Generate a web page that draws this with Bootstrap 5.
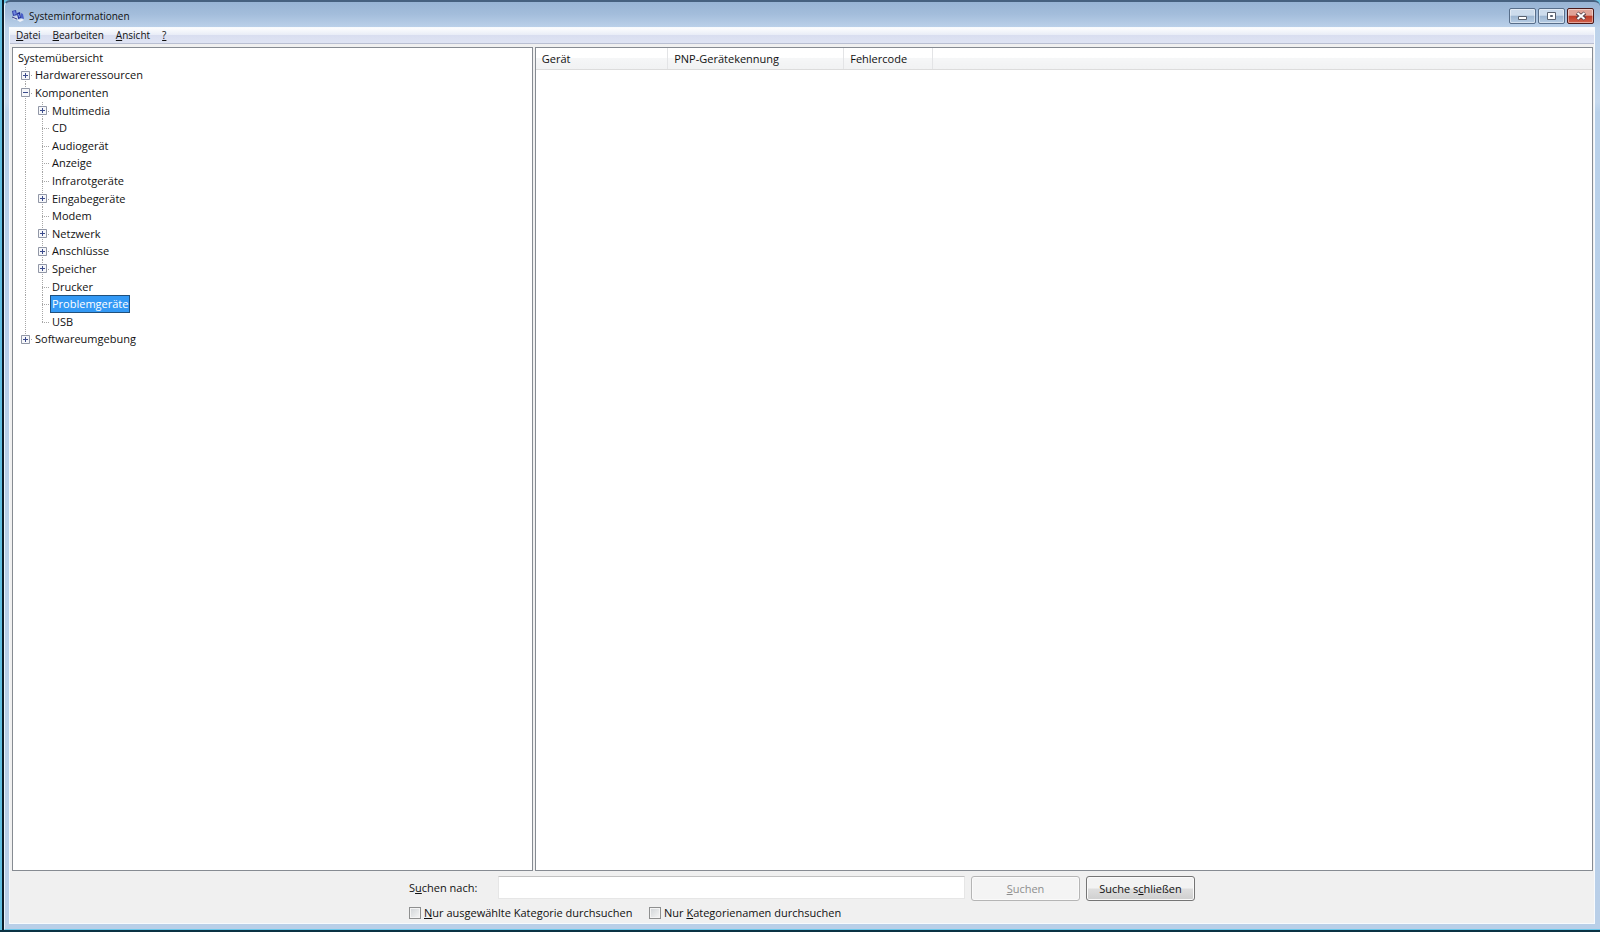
<!DOCTYPE html>
<html lang="de">
<head>
<meta charset="utf-8">
<meta name="viewport" content="width=device-width, initial-scale=1">
<title>Systeminformationen</title>
<link href="https://cdn.jsdelivr.net/npm/bootstrap@5.3.0/dist/css/bootstrap.min.css" rel="stylesheet">
<style>
body { font-family: "Open Sans", "Noto Sans", sans-serif; font-size: 11px; line-height: 16px; color: #111; background: linear-gradient(90deg, #62bfe0 0 2px, #0b1c28 2px 4px, #6cc4e4 4px); border-bottom: 2px solid #0a3344; }
a { color: inherit; text-decoration: none; }
.win { margin-left: 4px; border-top: 2px solid #46617f; border-left: 1px solid #e8f4fc; border-bottom: 1px solid #6cc7ea; border-radius: 6px 6px 0 0; padding: 0 5px 5px 4px; background: linear-gradient(#98b4d4 0, #a3bddb 12px, #bcd2ea 26px, #c6d9ee 100px, #b9d1ea 110px, #b9cfe8 100%); }
.title-bar { height: 25px; padding: 2px 1px 0 3px; gap: 5px; font-size: 10px; }
.caption-btn { width: 27px; height: 16px; border: 1px solid #586e8a; border-radius: 2px; background: linear-gradient(#cddcec 0 45%, #9db6d1 50%, #b7cde4); box-shadow: inset 0 0 0 1px #ffffff70; }
.caption-close { border-color: #4b1a1a; background: linear-gradient(#e0a397 0 45%, #bf3b27 50%, #d2624d); }
.client { background: #f0f0f0; border: 1px solid #f7fafd; }
.menu-bar { height: 16px; padding-left: 6px; gap: 12px; background: linear-gradient(#fcfdfe, #e9edf7 45%, #d9def0 50%, #dfe4f4); border-bottom: 1px solid #b9bfd2; font-size: 10px; line-height: 14px; }
.panes { gap: 2px; padding: 3px 1px 0 2px; }
.pane { background: #fff; border: 1px solid #868b92; }
.tree-pane { flex: 0 0 calc(33% - 1px); }
.tree { height: 299px; margin-top: 1px; padding-left: 4px; }
.tree li { flex: 1 1 0; }
.tree a { padding: 0 1px; white-space: nowrap; }
.tree a.selected { color: #fff; background: #3399f5; outline: 1px solid #20507c; }
.node { position: relative; width: 16px; margin-right: 1px; align-self: stretch; }
.node.line { background: linear-gradient(#0000, #0000), repeating-linear-gradient(#a6a6a6 0 1px, #fff 1px 2px) 8px 0 / 1px 100% no-repeat; }
.node.line.last { background-size: auto, 1px 50%; }
.node.stub::after { content: ""; position: absolute; left: 8px; right: 1px; top: 50%; border-top: 1px dotted #a6a6a6; }
.expander { position: relative; z-index: 1; width: 9px; height: 9px; margin-left: 4px; }
.grid-head th { height: 21px; padding: 2px 6px 0; font-weight: 400; border-right: 1px solid #e3e4e6; border-bottom: 1px solid #dcdcdc; background: linear-gradient(#fff 0 45%, #f5f6f7 50%, #f1f2f3); }
.grid-head th:last-child { border-right: 0; }
.search { width: 786px; max-width: 100%; padding: 5px 0 2px; }
.search-label { width: 89px; }
.search-box { height: 23px; border: 1px solid #e6e6e6; border-top-color: #c2c2c2; background: #fff; margin-right: 6px; }
.push { width: 109px; height: 25px; border: 1px solid #757575; border-radius: 3px; color: #111; background: linear-gradient(#f3f3f3 0 48%, #dedede 52%, #cfcfcf); box-shadow: inset 0 0 0 1px #fafafa; }
.push:disabled { color: #8e8e8e; border-color: #b5b5b5; background: #f4f4f4; }
.tick { appearance: none; width: 12px; height: 12px; margin-right: 3px; border: 1px solid #8e8f8f; background: linear-gradient(135deg, #cfd3d6, #f6f6f6); box-shadow: inset 0 0 0 1px #f4f4f4; }
.scope { width: 240px; white-space: nowrap; }
</style>
</head>
<body class="min-vh-100 d-flex flex-column">
<svg class="d-none">
  <symbol id="plus" viewBox="0 0 9 9"><path d="M.5.5h8v8h-8z" fill="#f6f7fa" stroke="#9197a6"/><path d="M2 4.500h5M4.500 2v5" stroke="#3c4c8c"/></symbol>
  <symbol id="minus" viewBox="0 0 9 9"><path d="M.5.5h8v8h-8z" fill="#f6f7fa" stroke="#9197a6"/><path d="M2 4.500h5" stroke="#3c4c8c"/></symbol>
</svg>
<div class="win flex-grow-1 d-flex flex-column">
  <header class="title-bar d-flex align-items-center">
    <svg width="12" height="12" viewBox="0 0 12 12" aria-hidden="true">
      <path d="M0 1l4-1 1 5-4 1z" fill="#3340a8"/><path d="M1 1.500l2-.5 1 3-2 1z" fill="#6f86e0"/>
      <path d="M5 3l3-1 1 6-3 1z" fill="#202c98"/><path d="M6 4l1 0 1 3-1 .5z" fill="#7d9cf8"/><path d="M9 3l2 1 1 5-3-1z" fill="#4a60c8"/>
      <path d="M0 7l5-1 1 3-4 1z" fill="#d3d9ee"/><path d="M5 10l5-1 2 1-4 2z" fill="#f0f2f8"/><path d="M0 7l5 2" stroke="#3b4389" fill="none"/>
    </svg>
    <span>Systeminformationen</span>
    <div class="ms-auto d-flex" style="gap:2px">
      <button class="caption-btn p-0 d-flex align-items-center justify-content-center" aria-label="Minimieren"><svg width="11" height="12" viewBox="0 0 11 12"><path d="M1.500 6.500h8v3h-8z" fill="#fff" stroke="#59616e"/></svg></button>
      <button class="caption-btn p-0 d-flex align-items-center justify-content-center" aria-label="Maximieren"><svg width="11" height="10" viewBox="0 0 11 10"><path d="M1.500 1.500h8v7h-8z" fill="#fff" stroke="#59616e"/><path d="M4.500 4.500h2v1h-2z" fill="#9db6d1" stroke="#59616e"/></svg></button>
      <button class="caption-btn caption-close p-0 d-flex align-items-center justify-content-center" aria-label="Schließen"><svg width="12" height="10" viewBox="0 0 12 10"><path d="M2 2l8 6M10 2l-8 6" stroke="#59434a" stroke-width="4"/><path d="M2.500 2l7 6M9.500 2l-7 6" stroke="#fff" stroke-width="2"/></svg></button>
    </div>
  </header>
  <div class="client flex-grow-1 d-flex flex-column">
    <nav class="menu-bar d-flex">
      <a href="#"><u>D</u>atei</a><a href="#"><u>B</u>earbeiten</a><a href="#"><u>A</u>nsicht</a><a href="#"><u>?</u></a>
    </nav>
    <main class="panes d-flex flex-grow-1">
      <section class="pane tree-pane">
        <ul class="tree list-unstyled d-flex flex-column mb-0">
          <li class="d-flex align-items-center"><a href="#">Systemübersicht</a></li>
          <li class="d-flex align-items-center"><span class="node line stub d-flex align-items-center"><button class="expander border-0 p-0 d-flex" aria-label="Erweitern"><svg width="9" height="9"><use href="#plus"/></svg></button></span><a href="#">Hardwareressourcen</a></li>
          <li class="d-flex align-items-center"><span class="node line stub d-flex align-items-center"><button class="expander border-0 p-0 d-flex" aria-label="Reduzieren"><svg width="9" height="9"><use href="#minus"/></svg></button></span><a href="#">Komponenten</a></li>
          <li class="d-flex align-items-center"><span class="node line"></span><span class="node line stub d-flex align-items-center"><button class="expander border-0 p-0 d-flex" aria-label="Erweitern"><svg width="9" height="9"><use href="#plus"/></svg></button></span><a href="#">Multimedia</a></li>
          <li class="d-flex align-items-center"><span class="node line"></span><span class="node line stub"></span><a href="#">CD</a></li>
          <li class="d-flex align-items-center"><span class="node line"></span><span class="node line stub"></span><a href="#">Audiogerät</a></li>
          <li class="d-flex align-items-center"><span class="node line"></span><span class="node line stub"></span><a href="#">Anzeige</a></li>
          <li class="d-flex align-items-center"><span class="node line"></span><span class="node line stub"></span><a href="#">Infrarotgeräte</a></li>
          <li class="d-flex align-items-center"><span class="node line"></span><span class="node line stub d-flex align-items-center"><button class="expander border-0 p-0 d-flex" aria-label="Erweitern"><svg width="9" height="9"><use href="#plus"/></svg></button></span><a href="#">Eingabegeräte</a></li>
          <li class="d-flex align-items-center"><span class="node line"></span><span class="node line stub"></span><a href="#">Modem</a></li>
          <li class="d-flex align-items-center"><span class="node line"></span><span class="node line stub d-flex align-items-center"><button class="expander border-0 p-0 d-flex" aria-label="Erweitern"><svg width="9" height="9"><use href="#plus"/></svg></button></span><a href="#">Netzwerk</a></li>
          <li class="d-flex align-items-center"><span class="node line"></span><span class="node line stub d-flex align-items-center"><button class="expander border-0 p-0 d-flex" aria-label="Erweitern"><svg width="9" height="9"><use href="#plus"/></svg></button></span><a href="#">Anschlüsse</a></li>
          <li class="d-flex align-items-center"><span class="node line"></span><span class="node line stub d-flex align-items-center"><button class="expander border-0 p-0 d-flex" aria-label="Erweitern"><svg width="9" height="9"><use href="#plus"/></svg></button></span><a href="#">Speicher</a></li>
          <li class="d-flex align-items-center"><span class="node line"></span><span class="node line stub"></span><a href="#">Drucker</a></li>
          <li class="d-flex align-items-center"><span class="node line"></span><span class="node line stub"></span><a href="#" class="selected" aria-current="true">Problemgeräte</a></li>
          <li class="d-flex align-items-center"><span class="node line"></span><span class="node line last stub"></span><a href="#">USB</a></li>
          <li class="d-flex align-items-center"><span class="node line last stub d-flex align-items-center"><button class="expander border-0 p-0 d-flex" aria-label="Erweitern"><svg width="9" height="9"><use href="#plus"/></svg></button></span><a href="#">Softwareumgebung</a></li>
        </ul>
      </section>
      <section class="pane flex-grow-1">
        <table class="grid-head w-100" style="table-layout:fixed">
          <colgroup><col style="width:132px"><col style="width:176px"><col style="width:89px"><col></colgroup>
          <thead><tr><th scope="col">Gerät</th><th scope="col">PNP-Gerätekennung</th><th scope="col">Fehlercode</th><th></th></tr></thead>
        </table>
      </section>
    </main>
    <form class="search mx-auto">
      <div class="d-flex">
        <label for="q" class="search-label pt-1">S<u>u</u>chen nach:</label>
        <input id="q" type="text" class="search-box flex-grow-1">
        <div class="d-flex" style="gap:6px">
          <button type="button" class="push p-0" disabled><u>S</u>uchen</button>
          <button type="button" class="push p-0">Suche s<u>c</u>hließen</button>
        </div>
      </div>
      <div class="d-flex mt-1">
        <div class="scope d-flex align-items-center"><input type="checkbox" id="sel" class="tick"><label for="sel"><u>N</u>ur ausgewählte Kategorie durchsuchen</label></div>
        <div class="scope d-flex align-items-center"><input type="checkbox" id="cat" class="tick"><label for="cat">Nur <u>K</u>ategorienamen durchsuchen</label></div>
      </div>
    </form>
  </div>
</div>
<script src="https://cdn.jsdelivr.net/npm/bootstrap@5.3.0/dist/js/bootstrap.bundle.min.js"></script>
</body>
</html>
